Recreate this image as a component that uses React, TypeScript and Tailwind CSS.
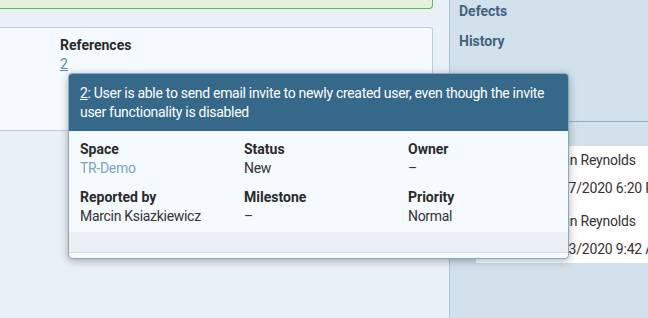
import React from "react";

const FONT = { fontFamily: "Roboto, 'Liberation Sans', sans-serif" };

type Field = { label: string; value: string; link?: boolean };

const FIELDS: Field[] = [
  { label: "Space", value: "TR-Demo", link: true },
  { label: "Status", value: "New" },
  { label: "Owner", value: "–" },
  { label: "Reported by", value: "Marcin Ksiazkiewicz" },
  { label: "Milestone", value: "–" },
  { label: "Priority", value: "Normal" },
];

function DefectTooltip() {
  return (
    <div className="absolute left-[68px] top-[73px] w-[501px] rounded-[4px] border border-[#86a9c4] bg-[#f5faff] shadow-[0_2px_8px_rgba(0,0,0,0.3)] overflow-hidden">
      <div className="bg-[#36688a] px-[11px] pt-[10px] pb-[9px] text-[14px] leading-[19px] tracking-[-0.3px] text-white">
        <span className="underline">2</span>: User is able to send email invite to newly created user, even though the invite user functionality is disabled
      </div>
      <div className="grid grid-cols-[164px_164px_164px] gap-y-[10px] px-[11px] pt-[9px] pb-[6px]">
        {FIELDS.map((f) => (
          <div key={f.label} className="flex flex-col text-[14px] leading-[19px]">
            <span className="font-bold text-[#2a2a2a]">{f.label}</span>
            <span className={`tracking-[-0.3px] ${f.link ? "text-[#7fa3c7]" : "text-[#333]"}`}>{f.value}</span>
          </div>
        ))}
      </div>
      <div className="h-[21px] bg-[#ebf0f5] border-b border-[#d5dde5]" />
      <div className="h-[5px]" />
    </div>
  );
}

export default function App() {
  return (
    <div className="relative flex h-[318px] w-[648px] overflow-hidden bg-[#eaf0f7]" style={FONT}>
      <div className="flex w-[449px] shrink-0 flex-col pr-[16px]">
        <div className="h-[9px] rounded-br-[4px] border-b border-r border-[#5cbf4a] bg-[#e6f2de]" />
        <div className="mt-[18px] h-[104px] rounded-r-[3px] border border-l-0 border-[#b8cde0] bg-[#f5faff] pl-[60px] pt-[8px] text-[14px] leading-[19px]">
          <div className="font-bold text-[#2a2a2a]">References</div>
          <div className="text-[#5b8bb8] underline">2</div>
        </div>
      </div>
      <div className="flex flex-1 flex-col border-l border-[#a9c1d5] bg-[#d3e1ec]">
        <div className="px-[9px] pt-[2px] text-[14px] font-bold leading-[19px] text-[#44637f]">
          <div>Defects</div>
          <div className="mt-[11px]">History</div>
        </div>
        <div className="mt-[70px] border-t border-[#8fadc6]" />
        <div className="ml-[26px] mt-[24px] flex h-[117px] flex-col bg-white pl-[64px] pt-[4px] text-[14px] leading-[19px] tracking-[-0.2px] text-[#333] whitespace-nowrap">
          <div className="mt-[1px]">Justin Reynolds</div>
          <div className="mt-[9px]">07/27/2020 6:20 PM</div>
          <div className="mt-[14px]">Justin Reynolds</div>
          <div className="mt-[9px]">07/23/2020 9:42 AM</div>
        </div>
      </div>
      <DefectTooltip />
    </div>
  );
}
